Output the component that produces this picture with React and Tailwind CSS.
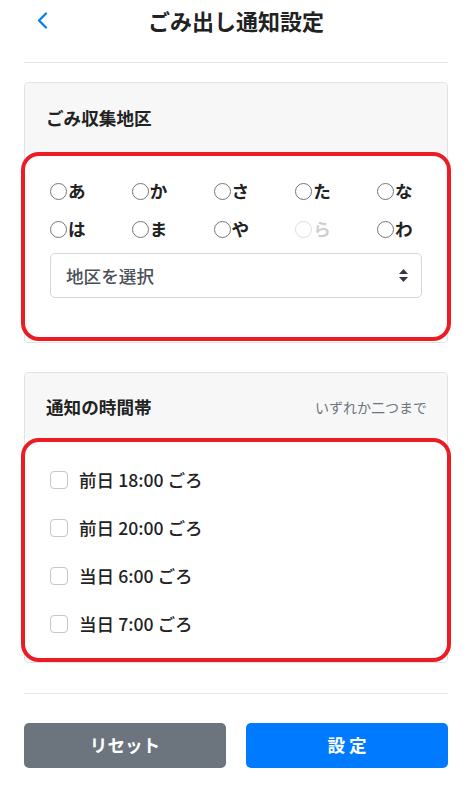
import { useState } from "react";

const KANA = ["あ", "か", "さ", "た", "な", "は", "ま", "や", "ら", "わ"];
const TIMES = ["前日 18:00 ごろ", "前日 20:00 ごろ", "当日 6:00 ごろ", "当日 7:00 ごろ"];

function Radio({ label, disabled }) {
  return (
    <label className={`flex items-center h-[38px] ${disabled ? "text-[#cfcfcf]" : "text-[#222]"}`}>
      <span
        className={`w-[17px] h-[17px] rounded-full border-[1.5px] bg-white ${
          disabled ? "border-[#dddddd]" : "border-[#767676]"
        }`}
      />
      <span className="ml-px text-[17.6px] font-semibold leading-none">{label}</span>
    </label>
  );
}

function Checkbox({ label, checked, onToggle }) {
  return (
    <label className="flex items-center h-[48px] cursor-pointer" onClick={onToggle}>
      <span
        className={`w-[18px] h-[18px] rounded-[4px] border ${
          checked ? "bg-[#007bff] border-[#007bff]" : "bg-white border-[#c3c8ce]"
        }`}
      />
      <span className="ml-[11px] text-[17.6px] font-medium text-[#222] leading-none">{label}</span>
    </label>
  );
}

export default function App() {
  const [checked, setChecked] = useState([]);

  function toggle(i) {
    setChecked((prev) => (prev.includes(i) ? prev.filter((x) => x !== i) : [...prev, i]));
  }

  return (
    <div className="min-h-[797px] bg-white px-6 font-['Noto_Sans_CJK_JP','Noto_Sans',sans-serif]">
      <header className="h-[40px] grid grid-cols-[1fr_auto_1fr] items-center">
        <div className="pl-[13px] flex items-center">
          <svg width="11" height="17" viewBox="0 0 11 17" fill="none">
            <path d="M9 1.5 2 8.5l7 7" stroke="#0a7cf5" strokeWidth="2.3" strokeLinecap="round" strokeLinejoin="round" />
          </svg>
        </div>
        <h1 className="text-[22px] font-bold text-[#222] leading-none">ごみ出し通知設定</h1>
        <div />
      </header>
      <hr className="mt-[22px] border-t border-[#e6e6e6]" />

      {/* 地区 */}
      <section className="mt-[19px] border border-[#e2e2e2] rounded-[4px]">
        <div className="h-[69px] bg-[#f7f7f7] flex items-center px-[21px] rounded-t-[4px]">
          <h2 className="text-[17.6px] font-bold text-[#222] leading-none">ごみ収集地区</h2>
        </div>
        <div className="-mx-[4px] mb-px border-4 border-[#ec1c24] rounded-[18px] bg-white pt-[16px] pb-[39px] pl-[25px]">
          <div className="grid grid-cols-[repeat(5,81.75px)]">
            {KANA.map((k) => (
              <Radio key={k} label={k} disabled={k === "ら"} />
            ))}
          </div>
          <div className="mt-[5px] w-[372px] h-[45px] border border-[#d3d7dc] rounded-[5px] flex items-center justify-between pl-[15px] pr-[13px]">
            <span className="text-[17.6px] text-[#495057] font-medium leading-none">地区を選択</span>
            <svg width="9" height="13" viewBox="0 0 9 13">
              <path d="M4.5 0 9 5H0z" fill="#343a40" />
              <path d="M4.5 13 9 8H0z" fill="#343a40" />
            </svg>
          </div>
        </div>
      </section>

      {/* 時間帯 */}
      <section className="mt-[29px] border border-[#e2e2e2] rounded-[4px]">
        <div className="h-[65px] bg-[#f7f7f7] flex items-center justify-between pl-[21px] pr-[20px] pt-[3px] rounded-t-[4px]">
          <h2 className="text-[17.6px] font-bold text-[#222] leading-none">通知の時間帯</h2>
          <span className="text-[14px] text-[#6c757d] leading-none">いずれか二つまで</span>
        </div>
        <div className="-mx-[4px] border-4 border-[#ec1c24] rounded-[18px] bg-white pt-[14px] pb-[10px] pl-[25px]">
          {TIMES.map((t, i) => (
            <Checkbox key={t} label={t} checked={checked.includes(i)} onToggle={() => toggle(i)} />
          ))}
        </div>
      </section>

      <hr className="mt-[30px] border-t border-[#e6e6e6]" />

      <div className="mt-[29px] grid grid-cols-2 gap-[20px]">
        <button
          className="h-[45px] rounded-[5px] bg-[#6c757d] text-white text-[17.6px] font-bold"
          onClick={() => setChecked([])}
        >
          リセット
        </button>
        <button className="h-[45px] rounded-[5px] bg-[#007bff] text-white text-[17.6px] font-bold">
          設 定
        </button>
      </div>
    </div>
  );
}
